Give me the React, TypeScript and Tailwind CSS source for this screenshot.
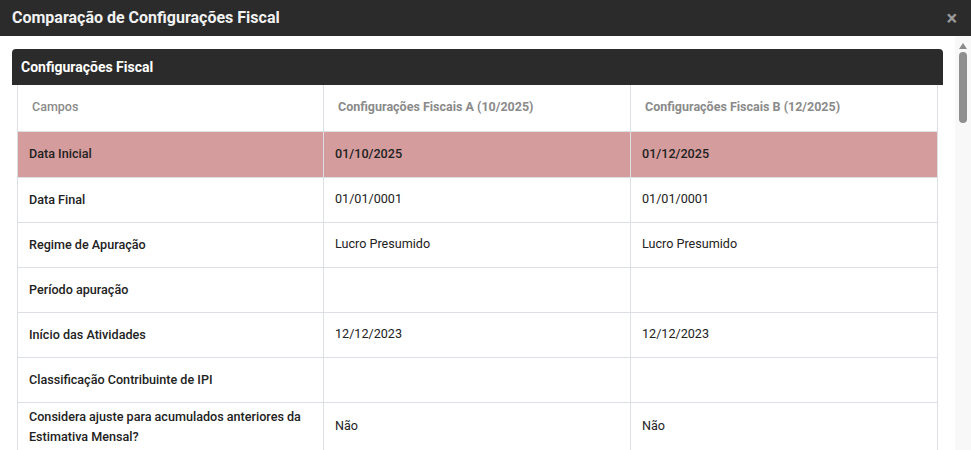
type Row = {
  label: string;
  a: string;
  b: string;
  highlight?: boolean;
};

const rows: Row[] = [
  { label: "Data Inicial", a: "01/10/2025", b: "01/12/2025", highlight: true },
  { label: "Data Final", a: "01/01/0001", b: "01/01/0001" },
  { label: "Regime de Apuração", a: "Lucro Presumido", b: "Lucro Presumido" },
  { label: "Período apuração", a: "", b: "" },
  { label: "Início das Atividades", a: "12/12/2023", b: "12/12/2023" },
  { label: "Classificação Contribuinte de IPI", a: "", b: "" },
  {
    label: "Considera ajuste para acumulados anteriores da Estimativa Mensal?",
    a: "Não",
    b: "Não",
  },
  { label: "", a: "", b: "" },
];

export default function App() {
  return (
    <div className="flex h-[450px] w-[971px] flex-col overflow-hidden bg-white font-['Roboto',sans-serif]">
      <div className="flex h-9 shrink-0 items-center justify-between bg-[#2b2b2b] pl-3 pr-[14px]">
        <h2 className="text-base font-bold text-[#f2f2f2]">
          Comparação de Configurações Fiscal
        </h2>
        <span className="text-[20px] font-bold leading-none text-[#9a9a9a]">×</span>
      </div>

      <div className="flex min-h-0 flex-1">
        <div className="min-w-0 flex-1 overflow-hidden pl-3 pr-3 pt-[13px]">
          <div className="flex h-9 items-center rounded-t bg-[#2b2b2b] px-[9px]">
            <h3 className="text-sm font-bold text-white">Configurações Fiscal</h3>
          </div>
          <div className="pl-[5px] pr-[6px]">
            <table className="w-[920px] table-fixed border-collapse border-x border-[#dcdfe3] text-[12.6px]">
              <colgroup>
                <col className="w-[306px]" />
                <col className="w-[307px]" />
                <col className="w-[307px]" />
              </colgroup>
              <thead>
                <tr className="h-[46px] text-[12.5px]">
                  <th className="border-r border-[#dcdfe3] px-[14px] text-left font-medium text-[#8a8a8a]">
                    Campos
                  </th>
                  <th className="border-r border-[#dcdfe3] px-[14px] text-left font-bold text-[#8a8a8a]">
                    Configurações Fiscais A (10/2025)
                  </th>
                  <th className="px-[14px] text-left font-bold text-[#8a8a8a]">
                    Configurações Fiscais B (12/2025)
                  </th>
                </tr>
              </thead>
              <tbody>
                {rows.map((r, i) => (
                  <tr
                    key={i}
                    className={`border-t border-[#dcdfe3] ${
                      r.highlight ? "h-[46px] bg-[#d49c9c]" : "h-[45px] bg-white"
                    }`}
                  >
                    <td className="border-r border-[#dcdfe3] px-[11px] py-1 font-medium leading-[20px] text-[#222]">
                      {r.label}
                    </td>
                    <td
                      className={`border-r border-[#dcdfe3] px-[11px] text-[#222] ${
                        r.highlight ? "font-medium" : ""
                      }`}
                    >
                      {r.a}
                    </td>
                    <td className={`px-[11px] text-[#222] ${r.highlight ? "font-medium" : ""}`}>
                      {r.b}
                    </td>
                  </tr>
                ))}
              </tbody>
            </table>
          </div>
        </div>

        <div className="flex w-4 shrink-0 flex-col items-center bg-[#f8f8f8] pt-[7px]">
          <div className="h-0 w-0 border-x-[4px] border-b-[6px] border-x-transparent border-b-[#8a8a8a]" />
          <div className="mt-[3px] h-[71px] w-2 rounded-full bg-[#8f8f8f]" />
        </div>
      </div>
    </div>
  );
}
